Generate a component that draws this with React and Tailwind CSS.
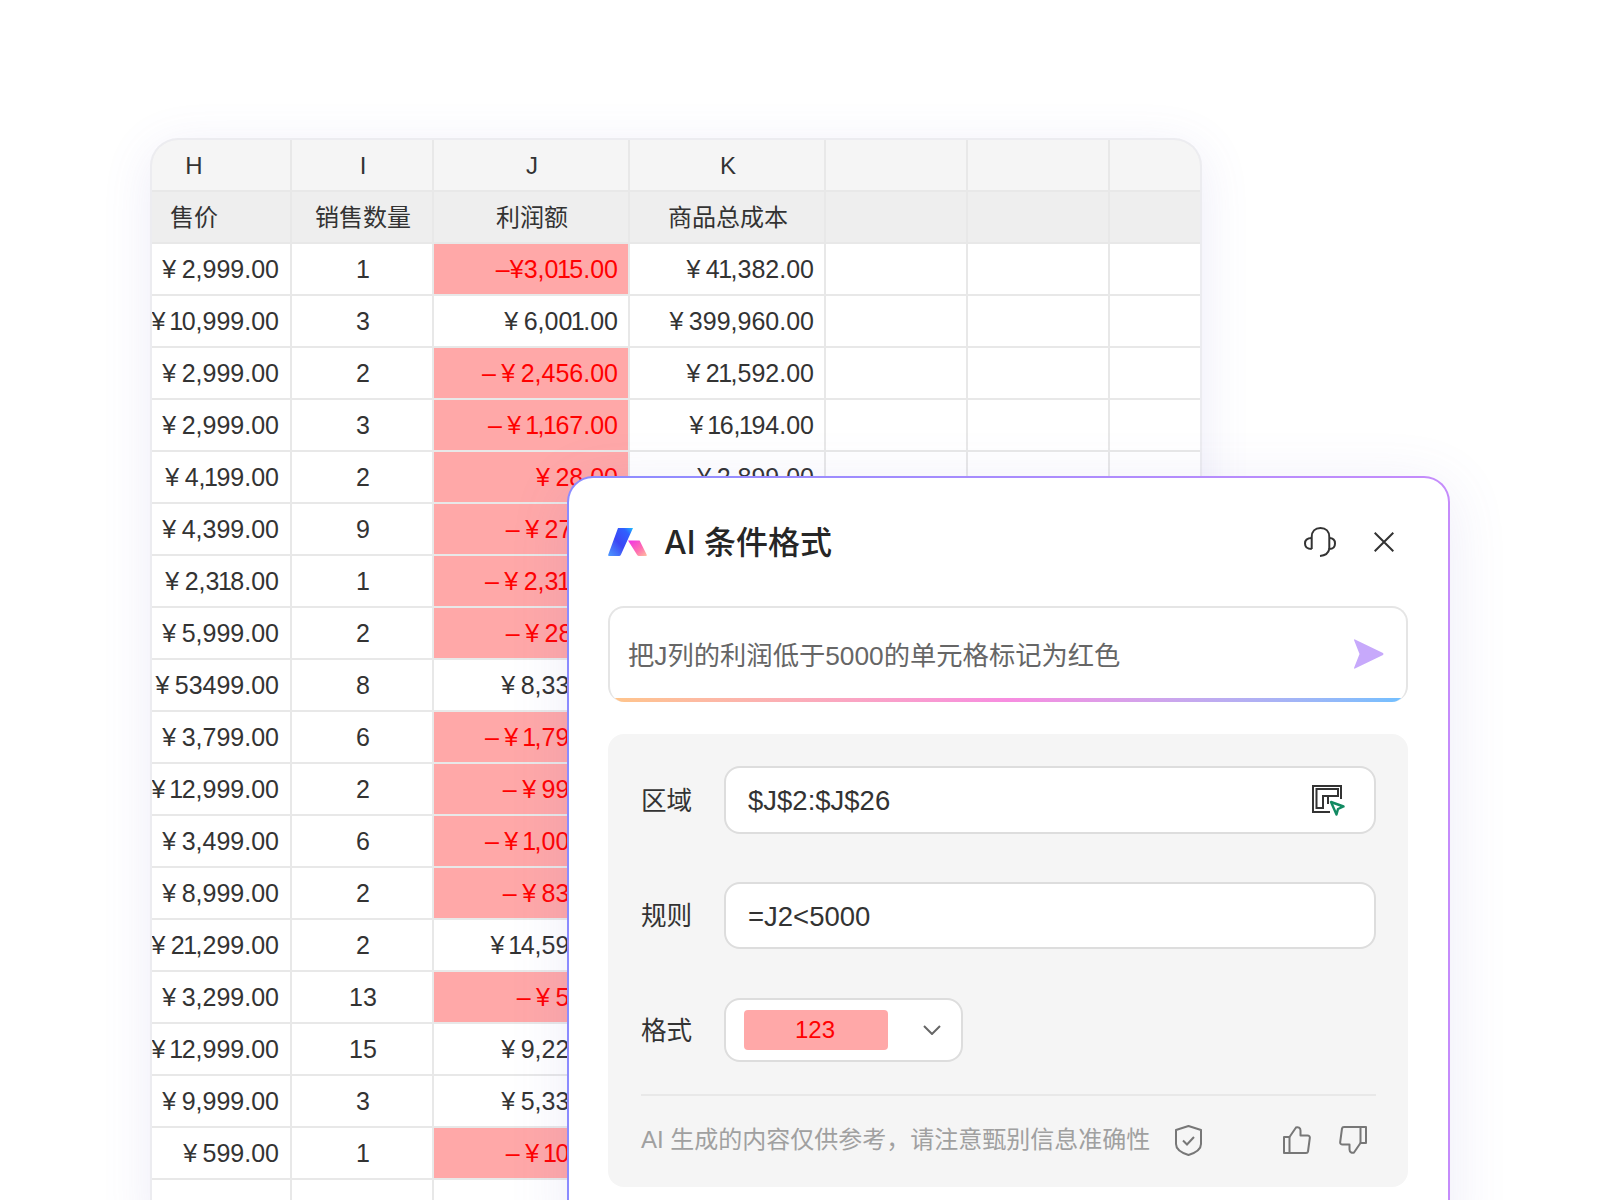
const rows = [
  ["¥ 2,999.00", "1", "–¥3,015.00", "¥ 41,382.00", true],
  ["¥ 10,999.00", "3", "¥ 6,001.00", "¥ 399,960.00", false],
  ["¥ 2,999.00", "2", "– ¥ 2,456.00", "¥ 21,592.00", true],
  ["¥ 2,999.00", "3", "– ¥ 1,167.00", "¥ 16,194.00", true],
  ["¥ 4,199.00", "2", "¥ 28.00", "¥ 2,899.00", true],
  ["¥ 4,399.00", "9", "– ¥ 271.00", "¥ 7,918.00", true],
  ["¥ 2,318.00", "1", "– ¥ 2,318.00", "¥ 4,636.00", true],
  ["¥ 5,999.00", "2", "– ¥ 281.00", "¥ 12,279.00", true],
  ["¥ 53499.00", "8", "¥ 8,332.00", "¥ 419,660.00", false],
  ["¥ 3,799.00", "6", "– ¥ 1,795.00", "¥ 24,589.00", true],
  ["¥ 12,999.00", "2", "– ¥ 996.00", "¥ 26,994.00", true],
  ["¥ 3,499.00", "6", "– ¥ 1,002.00", "¥ 21,996.00", true],
  ["¥ 8,999.00", "2", "– ¥ 832.00", "¥ 18,830.00", true],
  ["¥ 21,299.00", "2", "¥ 14,592.00", "¥ 28,006.00", false],
  ["¥ 3,299.00", "13", "– ¥ 52.00", "¥ 43,399.00", true],
  ["¥ 12,999.00", "15", "¥ 9,225.00", "¥ 185,760.00", false],
  ["¥ 9,999.00", "3", "¥ 5,338.00", "¥ 24,659.00", false],
  ["¥ 599.00", "1", "– ¥ 106.00", "¥ 705.00", true],
  ["", "", "", "", false],
];

// the 1 is narrower in the original font
const Money = ({ text }) => (
  <span className="[word-spacing:-1.5px]">
    {text.split("1").map((part, i) => (
      <span key={i}>
        {i > 0 && <span className="mx-[-1.5px]">1</span>}
        {part}
      </span>
    ))}
  </span>
);

const HeaderRow = ({ bg, first, second, third, fourth }) => (
  <>
    <div className={`${bg} h-[50px] flex items-center pt-[2px]`}>
      <span className="w-[84px] text-center">{first}</span>
    </div>
    <div className={`${bg} h-[50px] flex items-center justify-center pt-[2px] pl-[2px]`}>{second}</div>
    <div className={`${bg} h-[50px] flex items-center justify-center pt-[2px] pl-[2px]`}>{third}</div>
    <div className={`${bg} h-[50px] flex items-center justify-center pt-[2px] pl-[2px]`}>{fourth}</div>
    <div className={`${bg} h-[50px]`}></div>
    <div className={`${bg} h-[50px]`}></div>
    <div className={`${bg} h-[50px]`}></div>
  </>
);

const Sheet = () => (
  <div className="ml-[150px] pt-[138px] w-[1052px]">
    <div className="rounded-t-[28px] border-2 border-b-0 border-[#ececf0] overflow-hidden shadow-[0_10px_50px_rgba(110,100,200,0.12)] bg-[#e8e8e8]">
      <div className="grid grid-cols-[138px_140px_194px_194px_140px_140px_90px] gap-[2px] text-[24px] text-[#333333]">
        <HeaderRow bg="bg-[#f5f5f5]" first="H" second="I" third="J" fourth="K" />
        <HeaderRow bg="bg-[#eeeeee]" first="售价" second="销售数量" third="利润额" fourth="商品总成本" />
        {rows.map((row, i) => (
          <div key={i} className="contents">
            <div className="bg-white h-[50px] flex items-center justify-end pt-[2px] pr-[11px] text-[25px] whitespace-nowrap">
              <Money text={row[0]} />
            </div>
            <div className="bg-white h-[50px] flex items-center justify-center pt-[2px] pl-[2px] text-[25px]">{row[1]}</div>
            <div
              className={
                row[4]
                  ? "bg-[#ffa8a8] text-[#ff0000] h-[50px] flex items-center justify-end pt-[2px] pr-[10px] text-[25px] whitespace-nowrap"
                  : "bg-white h-[50px] flex items-center justify-end pt-[2px] pr-[10px] text-[25px] whitespace-nowrap"
              }
            >
              <Money text={row[2]} />
            </div>
            <div className="bg-white h-[50px] flex items-center justify-end pt-[2px] pr-[10px] text-[25px] whitespace-nowrap">
              <Money text={row[3]} />
            </div>
            <div className="bg-white h-[50px]"></div>
            <div className="bg-white h-[50px]"></div>
            <div className="bg-white h-[50px]"></div>
          </div>
        ))}
      </div>
    </div>
  </div>
);

const Logo = () => (
  <svg width="39" height="28" viewBox="0 0 39 28" className="-mt-[3px]">
    <defs>
      <linearGradient id="logoBlue" x1="0" y1="1" x2="1" y2="0">
        <stop offset="0" stopColor="#4f9bff" />
        <stop offset="0.45" stopColor="#3c46f4" />
        <stop offset="0.8" stopColor="#3060ff" />
        <stop offset="1" stopColor="#1cc0ff" />
      </linearGradient>
      <linearGradient id="logoPink" x1="0" y1="0" x2="1" y2="1">
        <stop offset="0" stopColor="#f02ee8" />
        <stop offset="0.6" stopColor="#ff70b0" />
        <stop offset="1" stopColor="#ffc0a0" />
      </linearGradient>
    </defs>
    <path d="M10 0H25L13 26.5Q12.4 28 11 28H1.2Q-0.4 28 0.3 26.4Z" fill="url(#logoBlue)" />
    <path d="M20 12.6H31.6L38.6 26.4Q39.2 28 37.6 28H31Q29.8 28 29.2 26.9Z" fill="url(#logoPink)" />
  </svg>
);

const Headset = () => (
  <svg width="32" height="30" viewBox="0 0 32 30" fill="none" stroke="#333333" strokeWidth="2">
    <path d="M7.7 22V10C7.7 4.5 11 1 16.5 1C22 1 25.3 4.5 25.3 10V22" />
    <path d="M7.7 11C3 11 1 12.5 1 16.5C1 20.5 3 22 7.7 22" />
    <path d="M25.3 11C29.5 11 31 13 31 16.5C31 20 29.5 22 25.3 22C24.5 25.8 21.5 28.6 16 29" />
  </svg>
);

const Close = () => (
  <svg width="20" height="20" viewBox="0 0 20 20" fill="none" stroke="#333333" strokeWidth="2">
    <path d="M0.7 0.7L19.3 19.3M19.3 0.7L0.7 19.3" />
  </svg>
);

const Send = () => (
  <svg width="30" height="30" viewBox="0 0 30 30">
    <path d="M0 1Q0 0 1 0.4L29 14Q30 15 29 16L1 29.6Q0 30 0 29L5.5 15Z" fill="#c7a9fb" />
  </svg>
);

const RangeIcon = () => (
  <svg width="33" height="31" viewBox="0 0 33 31" fill="none">
    <path d="M18 27H1V1H29V14" stroke="#333333" strokeWidth="2" />
    <path d="M16 19V11H26V4H4.5V23H11V11H16" stroke="#333333" strokeWidth="2" />
    <path d="M19 17L31.5 21.5L26 24L24.5 29.5Z" stroke="#128a62" strokeWidth="2.4" strokeLinejoin="round" />
  </svg>
);

const Chevron = () => (
  <svg width="18" height="10" viewBox="0 0 18 10" fill="none" stroke="#666666" strokeWidth="2">
    <path d="M1 1L9 9L17 1" />
  </svg>
);

const Shield = () => (
  <svg width="27" height="31" viewBox="0 0 27 31" fill="none" stroke="#777777" strokeWidth="2">
    <path d="M13.5 1L26 5V19C26 24 20 28 13.5 30C7 28 1 24 1 19V5Z" strokeLinejoin="round" />
    <path d="M8 15.5L12 19.5L19 12" />
  </svg>
);

const Thumb = ({ down }) => (
  <svg
    width="28"
    height="28"
    viewBox="0 0 28 28"
    fill="none"
    stroke="#777777"
    strokeWidth="2"
    strokeLinejoin="round"
    className={down ? "rotate-180" : ""}
  >
    <path d="M1 11H6.5V27H1Z" />
    <path d="M6.5 11L13 1.5C15 0.5 17.5 2 17.5 4.5V9.5H24.5C26 9.5 27 10.5 26.8 12L25 25.5C24.8 26.5 24 27 23 27H6.5" />
  </svg>
);

const Field = ({ label, children, className }) => (
  <div className={`flex items-center ${className}`}>
    <div className="w-[83px] pt-[2px] text-[25.6px] text-[#333333] shrink-0">{label}</div>
    {children}
  </div>
);

const Panel = () => (
  <div className="absolute left-[567px] top-[476px] w-[883px] h-[780px] p-[2px] rounded-[26px] bg-gradient-to-r from-[#8b8bff] to-[#c58cfb] shadow-[0_10px_60px_rgba(110,100,200,0.12)]">
    <div className="h-full rounded-[24px] bg-white pl-[39px] pr-[40px]">
      <div className="h-[130px] flex items-center">
        <Logo />
        <div className="ml-[17px] text-[32px] font-medium text-[#262626] font-['Inter','Noto_Sans_CJK_SC',sans-serif]">AI 条件格式</div>
        <div className="ml-auto -mt-[3px] mr-[14px] flex items-center gap-[38px]">
          <Headset />
          <Close />
        </div>
      </div>

      <div className="-mt-[2px] h-[96px] rounded-[16px] border-2 border-b-0 border-[#e5e5e5] overflow-hidden flex flex-col">
        <div className="flex-1 flex items-center justify-between pl-[18px] pr-[22px] text-[26.3px] text-[#666666]">
          <span className="pt-[8px]">把J列的利润低于5000的单元格标记为红色</span>
          <span className="pt-[1px]"><Send /></span>
        </div>
        <div className="h-[4px] -mx-[2px] bg-gradient-to-r from-[#ffc58a] via-[#f78de0] to-[#6fc0ff]"></div>
      </div>

      <div className="mt-[32px] h-[453px] rounded-[16px] bg-[#f5f5f5] pl-[33px] pr-[32px] pt-[32px]">
        <Field label="区域">
          <div className="flex-1 h-[68px] rounded-[16px] border-2 border-[#dddddd] bg-white flex items-center justify-between pl-[22px] pr-[29px] text-[27.5px] text-[#333333]">
            <span className="pt-[1px]">$J$2:$J$26</span>
            <RangeIcon />
          </div>
        </Field>
        <Field label="规则" className="mt-[48px]">
          <div className="flex-1 h-[67px] rounded-[16px] border-2 border-[#dddddd] bg-white flex items-center pl-[22px] pt-[3px] text-[27.5px] text-[#333333]">
            =J2&lt;5000
          </div>
        </Field>
        <Field label="格式" className="mt-[49px]">
          <div className="w-[239px] h-[64px] rounded-[16px] border-2 border-[#dddddd] bg-white flex items-center pl-[18px] pr-[20px] justify-between">
            <div className="w-[144px] h-[40px] rounded-[4px] bg-[#ffa8a8] text-[#ff0000] text-[24px] flex items-center justify-center pr-[2px]">123</div>
            <Chevron />
          </div>
        </Field>
        <div className="mt-[32px] h-[2px] bg-[#e8e8e8]"></div>
        <div className="mt-[26px] flex items-center text-[24px] text-[#a0a0a0]">
          <span className="whitespace-nowrap">AI 生成的内容仅供参考，请注意甄别信息准确性</span>
          <span className="ml-[25px]"><Shield /></span>
          <span className="ml-auto mr-[9px] flex items-center gap-[28px]">
            <Thumb />
            <Thumb down />
          </span>
        </div>
      </div>
    </div>
  </div>
);

export default function App() {
  return (
    <div className="relative w-[1600px] h-[1200px] overflow-hidden bg-white font-['Liberation_Sans','Noto_Sans_CJK_SC',sans-serif]">
      <Sheet />
      <Panel />
    </div>
  );
}
